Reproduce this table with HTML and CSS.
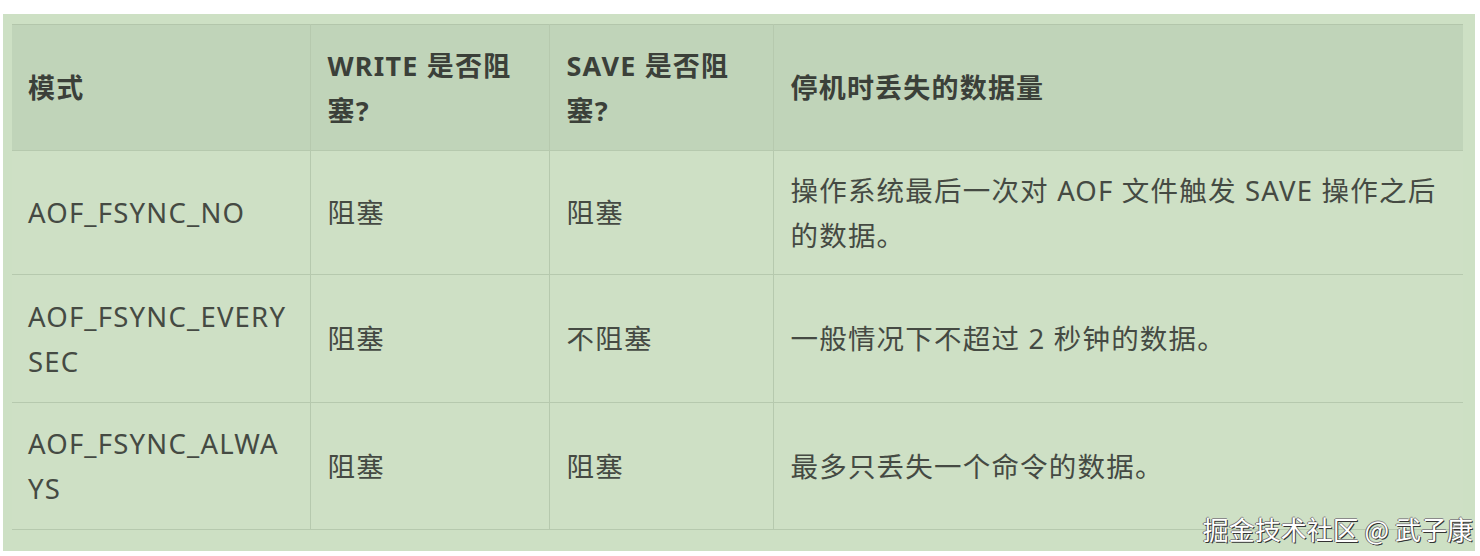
FILE: index.html
```html
<!DOCTYPE html>
<html lang="zh-CN">
<head>
<meta charset="utf-8">
<title>AOF fsync 模式</title>
<link rel="stylesheet" href="styles.css">
</head>
<body>
<div class="panel">
  <table class="modes">
    <colgroup>
      <col class="c1"><col class="c2"><col class="c3"><col class="c4">
    </colgroup>
    <thead>
      <tr class="head">
        <th>模式</th>
        <th>WRITE 是否阻塞?</th>
        <th>SAVE 是否阻塞?</th>
        <th>停机时丢失的数据量</th>
      </tr>
    </thead>
    <tbody>
      <tr class="r1">
        <td>AOF_FSYNC_NO</td>
        <td>阻塞</td>
        <td>阻塞</td>
        <td>操作系统最后一次对 AOF 文件触发 SAVE 操作之后的数据。</td>
      </tr>
      <tr class="r2">
        <td class="mode">AOF_FSYNC_EVERY<br>SEC</td>
        <td>阻塞</td>
        <td>不阻塞</td>
        <td>一般情况下不超过 2 秒钟的数据。</td>
      </tr>
      <tr class="r3">
        <td class="mode">AOF_FSYNC_ALWA<br>YS</td>
        <td>阻塞</td>
        <td>阻塞</td>
        <td>最多只丢失一个命令的数据。</td>
      </tr>
    </tbody>
  </table>
  <div class="watermark">掘金技术社区 @ 武子康</div>
</div>
</body>
</html>
```
FILE: styles.css
```css
html, body {
  margin: 0;
  padding: 0;
  background: #ffffff;
}

body {
  width: 1480px;
  height: 556px;
  overflow: hidden;
}

.panel {
  position: relative;
  margin: 14px 5px 0 3px;
  padding: 10px 12px 21px 9px;
  background: #cde0c4;
}

.modes {
  width: 1451px;
  border-collapse: collapse;
  table-layout: fixed;
  font-family: "Noto Sans", "Noto Sans CJK SC", sans-serif;
  font-size: 27.5px;
  line-height: 45px;
  color: #454a43;
}

.c1 { width: 298px; }
.c2 { width: 239px; }
.c3 { width: 224px; }
.c4 { width: 690px; }

.modes th,
.modes td {
  text-align: left;
  vertical-align: middle;
  padding: 0 12px 0 17px;
  border-left: 1px solid #b6c9ae;
  border-bottom: 1px solid #b6c9ae;
  letter-spacing: 1.2px;
}

.modes th:first-child,
.modes td:first-child {
  border-left: none;
  padding-left: 16px;
  padding-right: 4px;
}

.head {
  background: #c0d4b9;
  height: 126px;
  border-top: 1px solid #b3c6ab;
}

.head th {
  font-weight: 700;
  color: #3b4039;
  font-size: 27px;
  letter-spacing: 1.2px;
}

.modes tbody tr {
  background: #cee0c5;
}

.r1 { height: 124px; }
.r2 { height: 128px; }
.r3 { height: 127px; }

.mode {
  white-space: nowrap;
}

.watermark {
  position: absolute;
  right: 2px;
  bottom: 7px;
  font-family: "Noto Sans CJK SC", sans-serif;
  font-size: 26px;
  line-height: 30px;
  color: #ffffff;
  letter-spacing: 0px;
  text-shadow:
    1px 1px 0 #333333,
    -1px 0 0 #6a6a6a,
    0 -1px 0 #8a8a8a;
}
```
